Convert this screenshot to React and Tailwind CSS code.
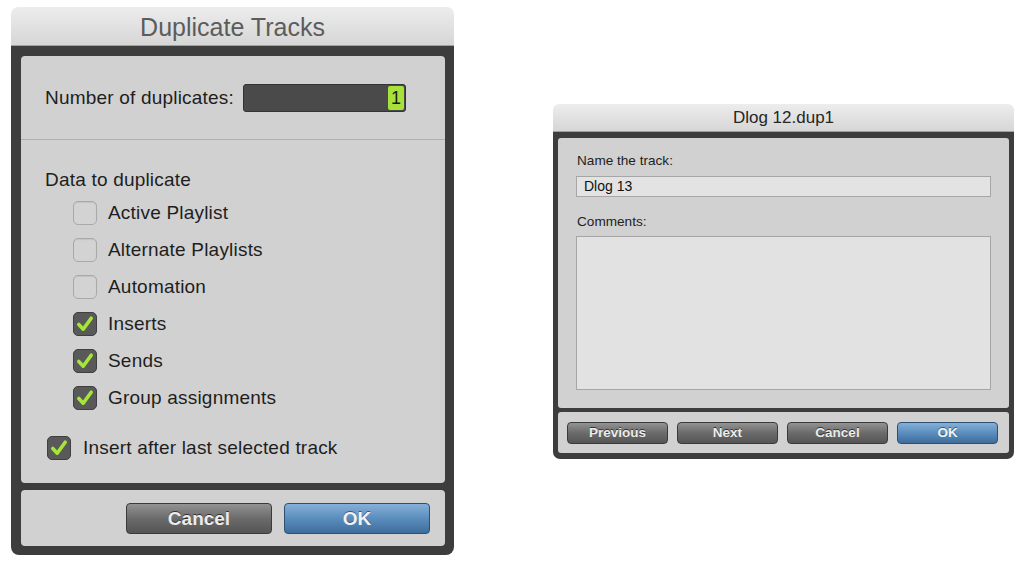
import React from 'react'

const font = { fontFamily: '"Liberation Sans", Arial, sans-serif' }

function Check({ checked }) {
  return checked ? (
    <div className="w-[24px] h-[24px] rounded-[5px] bg-[#595959] border border-[#3f3f3f] flex items-center justify-center shrink-0">
      <svg width="20" height="20" viewBox="0 0 20 20">
        <path d="M3.8 10.5 L8.2 15.2 L16.2 4.2" fill="none" stroke="#a6e63a" strokeWidth="3.6" strokeLinecap="round" strokeLinejoin="round" />
      </svg>
    </div>
  ) : (
    <div className="w-[24px] h-[24px] rounded-[5px] bg-[#d3d3d3] border border-[#a9a9a9] shadow-[inset_0_1px_1px_rgba(0,0,0,0.08)] shrink-0" />
  )
}

function GrayButton({ label, className }) {
  return (
    <div className={'flex items-center justify-center rounded-[4px] border border-[#3a3a3a] bg-gradient-to-b from-[#939393] via-[#6b6b6b] to-[#555555] font-bold text-[#ececec] [text-shadow:0_-1px_0_rgba(0,0,0,0.6)] ' + className}>
      {label}
    </div>
  )
}

function BlueButton({ label, className }) {
  return (
    <div className={'flex items-center justify-center rounded-[4px] border border-[#2c4f72] bg-gradient-to-b from-[#86b0d6] via-[#5a8dbd] to-[#3e6d9b] font-bold text-[#f2f2f2] [text-shadow:0_-1px_0_rgba(0,0,0,0.45)] ' + className}>
      {label}
    </div>
  )
}

const items = [
  { label: 'Active Playlist', checked: false },
  { label: 'Alternate Playlists', checked: false },
  { label: 'Automation', checked: false },
  { label: 'Inserts', checked: true },
  { label: 'Sends', checked: true },
  { label: 'Group assignments', checked: true },
]

function DuplicateTracks() {
  return (
    <div className="w-[443px] ml-[11px] mt-[7px] shrink-0">
      {/* Title */}
      <div className="h-[39px] pt-[3px] rounded-t-[7px] bg-gradient-to-b from-[#ededed] to-[#d6d6d6] border-b border-[#a0a0a0] flex items-center justify-center text-[25px] text-[#5c5c5c]">
        Duplicate Tracks
      </div>

      <div className="bg-[#3d3d3d] pt-[10px] pl-[10px] pr-[9px] pb-[9px] rounded-b-[8px] flex flex-col gap-[7px]">
        <div className="h-[427px] rounded-[4px] bg-[#d1d1d1] flex flex-col text-[19px] tracking-[0.2px] text-[#1e1e1e]">
          <div className="h-[83px] flex items-center pl-[24px] pt-[1px]">
            <span className="w-[198px] shrink-0">Number of duplicates:</span>
            <div className="w-[163px] h-[28px] rounded-[3px] bg-[#4a4a4a] border border-[#333] flex items-center justify-end pr-[1px]">
              <div className="w-[16px] h-[24px] rounded-[2px] bg-[#a7e23a] flex items-center justify-center text-[18px] text-[#1a1a1a]">1</div>
            </div>
          </div>
          <div className="border-t border-[#b0b0b0]" />

          <div className="pt-[27px] flex flex-col">
            <div className="h-[27px] flex items-center pl-[24px]">Data to duplicate</div>
            {items.map((it) => (
              <div key={it.label} className="h-[37px] flex items-center pl-[52px] gap-[11px]">
                <Check checked={it.checked} />
                <span className="pt-[2px]">{it.label}</span>
              </div>
            ))}
            <div className="mt-[13px] h-[37px] flex items-center pl-[26px] gap-[12px]">
              <Check checked />
              <span className="pt-[2px]">Insert after last selected track</span>
            </div>
          </div>
        </div>

        <div className="h-[56px] rounded-[4px] bg-[#d1d1d1] flex items-center justify-end pr-[15px] gap-[12px]">
          <GrayButton label="Cancel" className="w-[146px] h-[31px] pt-[2px] text-[19px]" />
          <BlueButton label="OK" className="w-[146px] h-[31px] pt-[2px] text-[19px]" />
        </div>
      </div>
    </div>
  )
}

function TrackName() {
  return (
    <div className="w-[461px] mt-[104px] ml-[99px] shrink-0">
      <div className="h-[28px] pt-[1px] rounded-t-[6px] bg-gradient-to-b from-[#ededed] to-[#d6d6d6] border-b border-[#a0a0a0] flex items-center justify-center text-[17px] text-[#262626]">
        Dlog 12.dup1
      </div>

      <div className="bg-[#3d3d3d] pt-[6px] px-[5px] pb-[6px] rounded-b-[7px] flex flex-col gap-[4px]">
        <div className="h-[270px] rounded-[3px] bg-[#d1d1d1] px-[18px] pt-[15px] text-[13.6px] text-[#1e1e1e]">
          <div className="leading-[16px] pl-[1px]">Name the track:</div>
          <div className="mt-[7px] h-[21px] bg-[#e3e3e3] border border-[#a6a6a6] flex items-center pl-[7px] text-[14px] text-[#111]">
            Dlog 13
          </div>
          <div className="mt-[17px] leading-[16px] pl-[1px]">Comments:</div>
          <div className="mt-[6px] h-[154px] bg-[#e2e2e2] border border-[#a6a6a6]" />
        </div>

        <div className="h-[41px] rounded-[3px] bg-[#d1d1d1] flex items-center pl-[9px] gap-[9px]">
          <GrayButton label="Previous" className="w-[101px] h-[22px] pt-[2px] text-[13.5px]" />
          <GrayButton label="Next" className="w-[101px] h-[22px] pt-[2px] text-[13.5px]" />
          <GrayButton label="Cancel" className="w-[101px] h-[22px] pt-[2px] text-[13.5px]" />
          <BlueButton label="OK" className="w-[101px] h-[22px] pt-[2px] text-[13.5px]" />
        </div>
      </div>
    </div>
  )
}

export default function App() {
  return (
    <div className="w-[1024px] h-[567px] bg-white flex items-start overflow-hidden" style={font}>
      <DuplicateTracks />
      <TrackName />
    </div>
  )
}
